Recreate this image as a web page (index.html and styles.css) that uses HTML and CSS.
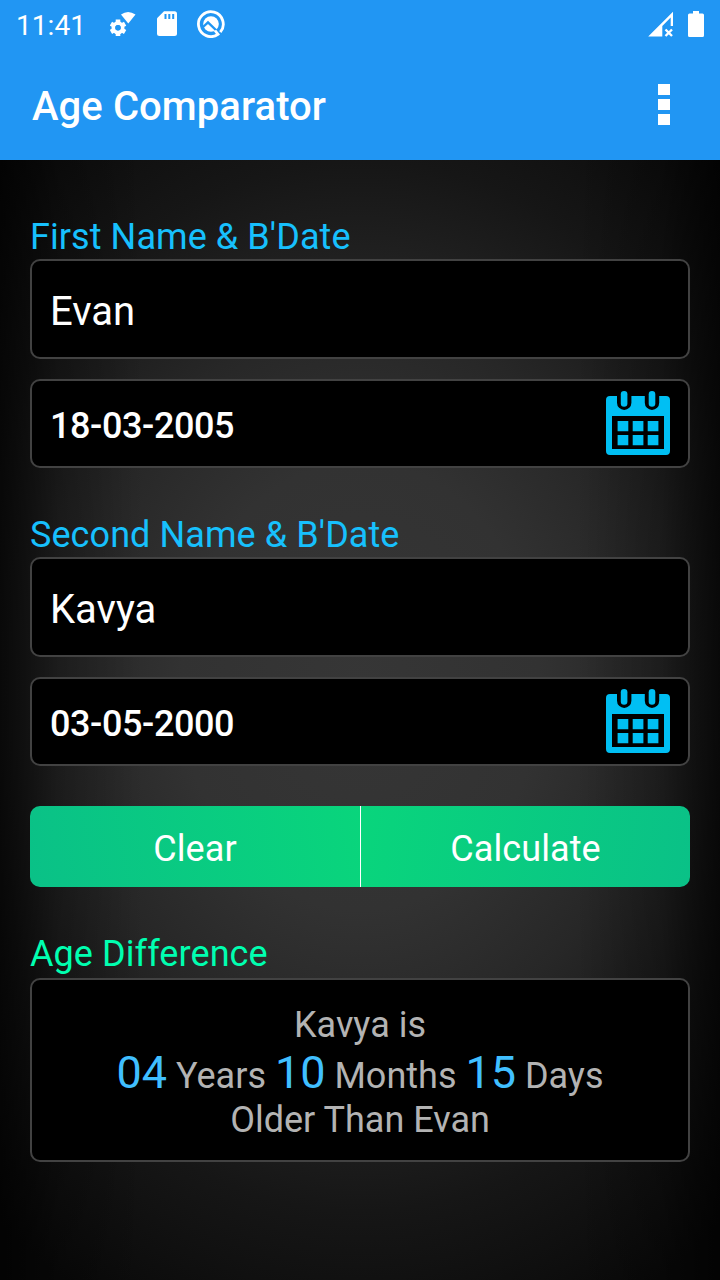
FILE: index.html
```html
<!DOCTYPE html>
<html lang="en">
<head>
<meta charset="utf-8">
<title>Age Comparator</title>
<link rel="stylesheet" href="styles.css">
</head>
<body>
<svg class="defs" width="0" height="0">
  <symbol id="calendar" viewBox="0 0 64 64">
    <path fill="#00bff3" d="M4 5H11V11.700a7.200 7.200 0 0 0 14.400 0V5H38.800V11.700a7.200 7.200 0 0 0 14.400 0V5H60a4 4 0 0 1 4 4V60a4 4 0 0 1-4 4H4a4 4 0 0 1-4-4V9a4 4 0 0 1 4-4Z"/>
    <rect x="6" y="25" width="52" height="33" fill="#000"/>
    <path fill="#00bff3" d="M11.600 30h10.700v10.300H11.600zM26.700 30h10.700v10.300H26.700zM41.700 30h10.700v10.300H41.700zM11.600 44h10.700v10.300H11.600zM26.700 44h10.700v10.300H26.700zM41.700 44h10.700v10.300H41.700z"/>
    <rect x="14.800" y="0" width="6.600" height="15.800" rx="3.300" fill="#00bff3"/>
    <rect x="42.700" y="0" width="6.600" height="15.800" rx="3.300" fill="#00bff3"/>
  </symbol>
</svg>
<header class="top">
  <div class="status">
    <span class="time">11:41</span>
    <svg class="i-gear" width="26" height="26" viewBox="0 0 26 26" fill="#fff">
      <path d="M11 3.500Q18-1.500 25.500 3.500L18.300 12.500Z"/>
      <g stroke="#fff" stroke-width="4.600">
        <path d="M8 8.600V13M8 20v4.900M.9 12.700l4 2.300M11 18.500l4.100 2.400M.9 20.900l4.100-2.400M11 15l4.100-2.300"/>
      </g>
      <circle cx="8" cy="16.800" r="4.600" fill="none" stroke="#fff" stroke-width="3.800"/>
      <circle cx="8" cy="16.800" r="2.700" fill="#2196f3"/>
    </svg>
    <svg class="i-sd" width="20" height="26" viewBox="0 0 20 26">
      <path fill="#fff" d="M7 .3H17.500A2.500 2.500 0 0 1 20 2.800V22.500A2.500 2.500 0 0 1 17.500 25H2.500A2.500 2.500 0 0 1 0 22.500V7.300Z"/>
      <path fill="#2196f3" d="M7.500 3h2v5h-2zM11.300 3h2v5h-2zM15.200 3h2v5h-2z"/>
    </svg>
    <svg class="i-q" width="28" height="28" viewBox="0 0 28 28">
      <circle cx="14" cy="14" r="7.800" fill="#fff"/>
      <path d="M5.500 17.500L11 12.300L21 22" fill="none" stroke="#2196f3" stroke-width="2.400"/>
      <path d="M18 20.500L21 24.300A12.400 12.400 0 1 1 23.300 22.200" fill="none" stroke="#fff" stroke-width="2.800"/>
    </svg>
    <span class="spacer"></span>
    <svg class="i-signal" width="26" height="26" viewBox="0 0 26 26">
      <path fill="#fff" d="M.2 25.500L25 .8V15H22.700V6.600L14.300 15V25.500Z"/>
      <path d="M17.500 18.500l6.500 6.500M24 18.500l-6.500 6.500" stroke="#fff" stroke-width="2.400"/>
    </svg>
    <svg class="i-battery" width="16" height="26" viewBox="0 0 16 26">
      <path fill="#fff" d="M5 0h6v2.500h3.500A1.500 1.500 0 0 1 16 4V24.500A1.500 1.500 0 0 1 14.500 26h-13A1.500 1.500 0 0 1 0 24.500V4A1.500 1.500 0 0 1 1.500 2.500H5Z"/>
    </svg>
  </div>
  <div class="bar">
    <h1 class="title">Age Comparator</h1>
    <div class="more"><i class="dot"></i><i class="dot"></i><i class="dot"></i></div>
  </div>
</header>
<main class="content">
  <section class="person">
    <div class="label">First Name &amp; B'Date</div>
    <div class="field name">Evan</div>
    <div class="field date"><span>18-03-2005</span><svg width="64" height="64"><use href="#calendar"/></svg></div>
  </section>
  <section class="person">
    <div class="label">Second Name &amp; B'Date</div>
    <div class="field name">Kavya</div>
    <div class="field date"><span>03-05-2000</span><svg width="64" height="64"><use href="#calendar"/></svg></div>
  </section>
  <div class="buttons">
    <div class="btn clear">Clear</div>
    <div class="btn calc">Calculate</div>
  </div>
  <div class="label result-label">Age Difference</div>
  <div class="field result">
    <div class="line">Kavya is</div>
    <div class="line big"><b class="num">04</b> Years <b class="num">10</b> Months <b class="num">15</b> Days</div>
    <div class="line">Older Than Evan</div>
  </div>
</main>
</body>
</html>
```
FILE: styles.css
```css
* { box-sizing: border-box; }
body {
  margin: 0;
  width: 720px;
  height: 1280px;
  overflow: hidden;
  display: flex;
  flex-direction: column;
  background: #000;
  font-family: Roboto, "Liberation Sans", sans-serif;
}
.defs { display: none; }
.top { height: 160px; background: #2196f3; color: #fff; }
.status { height: 48px; display: flex; align-items: flex-start; padding: 11px 16px 0; }
.status svg { flex: none; }
.time { width: 94px; margin-top: -2px; font-size: 28px; line-height: 34px; letter-spacing: 0.05px; }
.i-sd { margin-left: 21px; }
.i-q { margin: -1px 0 0 20px; }
.spacer { flex: 1; }
.i-signal { margin-right: 14px; }
.bar { height: 112px; display: flex; align-items: center; justify-content: space-between; padding: 3px 50px 0 32px; }
.title { margin: 0; padding-top: 2px; font-size: 40px; line-height: 48px; font-weight: 500; letter-spacing: 0.08px; }
.more { display: flex; flex-direction: column; gap: 4px; margin-bottom: 3px; }
.dot { width: 12px; height: 11px; background: #fff; }
.content {
  flex: 1;
  padding: 56px 30px 0;
  background:
    linear-gradient(90deg, rgba(0,0,0,.7), rgba(0,0,0,.25) 8%, rgba(0,0,0,0) 20%, rgba(0,0,0,0) 80%, rgba(0,0,0,.25) 92%, rgba(0,0,0,.7)),
    radial-gradient(ellipse 560px 700px at 50% 47%, #363636 0%, #323232 32%, #272727 52%, #161616 75%, #090909 100%);
}
.person { height: 298px; }
.label { height: 43px; font-size: 36px; line-height: 42px; letter-spacing: 0.08px; color: #17c0fd; white-space: nowrap; }
.field { background: #000; border: 2px solid #424242; border-radius: 10px; color: #fff; }
.name { height: 100px; padding: 4px 18px 0; display: flex; align-items: center; font-size: 40px; }
.date { height: 89px; margin-top: 20px; padding: 0 18px 1px; display: flex; align-items: center; justify-content: space-between; font-size: 36px; font-weight: 500; letter-spacing: -0.4px; }
.date span { padding-top: 6px; }
.buttons { display: flex; height: 81px; margin-top: -6px; border-radius: 10px; overflow: hidden; color: #fff; font-size: 36px; }
.btn { display: flex; align-items: center; justify-content: center; padding-top: 4px; letter-spacing: 0.08px; }
.clear { width: 331px; border-right: 1px solid #fff; background: linear-gradient(80deg, #0ac187, #09d57c); }
.calc { flex: 1; background: linear-gradient(100deg, #09d57c, #0ac187); }
.result-label { margin-top: 46px; height: 45px; color: #00ffb0; }
.result { height: 184px; padding: 24px 0 0; text-align: center; color: #b3b3b3; font-size: 36px; }
.line { line-height: 43px; height: 43px; white-space: nowrap; }
.big { height: 52px; line-height: 52px; }
.num { font-size: 45px; font-weight: 400; color: #40bfff; }
```
